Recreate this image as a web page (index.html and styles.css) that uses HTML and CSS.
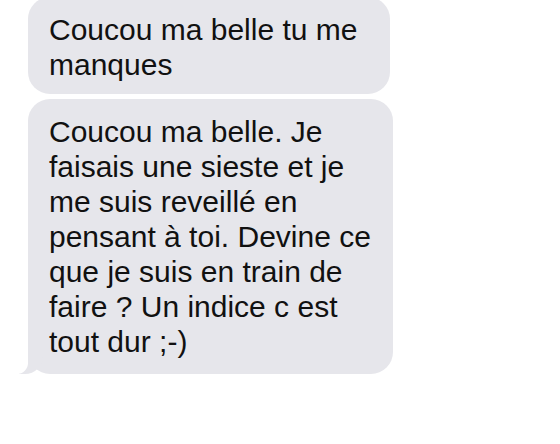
FILE: index.html
```html
<!DOCTYPE html>
<html lang="fr">
<head>
    <meta charset="UTF-8">
    <meta name="viewport" content="width=device-width, initial-scale=1.0">
    <title>Messages</title>
    <link rel="stylesheet" href="styles.css">
</head>
<body>
    <div class="conversation">
        <div class="bubble first">
            Coucou ma belle tu me manques
        </div>
        <div class="bubble tail">
            Coucou ma belle. Je faisais une sieste et je me suis reveillé en pensant à toi. Devine ce que je suis en train de faire ? Un indice c est tout dur ;-)
        </div>
    </div>
</body>
</html>
```

FILE: styles.css
```css
body {
    margin: 0;
    background-color: #ffffff;
    font-family: "Liberation Sans", Arial, sans-serif;
    color: #111111;
}
.conversation {
    display: flex;
    flex-direction: column;
    align-items: flex-start;
    gap: 5px;
    padding-left: 28px;
    margin-top: -3px;
}
.bubble {
    position: relative;
    box-sizing: border-box;
    background-color: #e6e6eb;
    border-radius: 22px;
    padding: 15px 18px 15px 21px;
    font-size: 30px;
    line-height: 35px;
}
.first {
    width: 362px;
    padding-bottom: 12px;
}
.tail {
    width: 365px;
}
.tail::before {
    content: "";
    position: absolute;
    bottom: 0;
    left: -9px;
    width: 24px;
    height: 24px;
    background-color: #e6e6eb;
    border-bottom-right-radius: 18px;
}
.tail::after {
    content: "";
    position: absolute;
    bottom: 0;
    left: -13px;
    width: 13px;
    height: 24px;
    background-color: #ffffff;
    border-bottom-right-radius: 11px;
}
```
